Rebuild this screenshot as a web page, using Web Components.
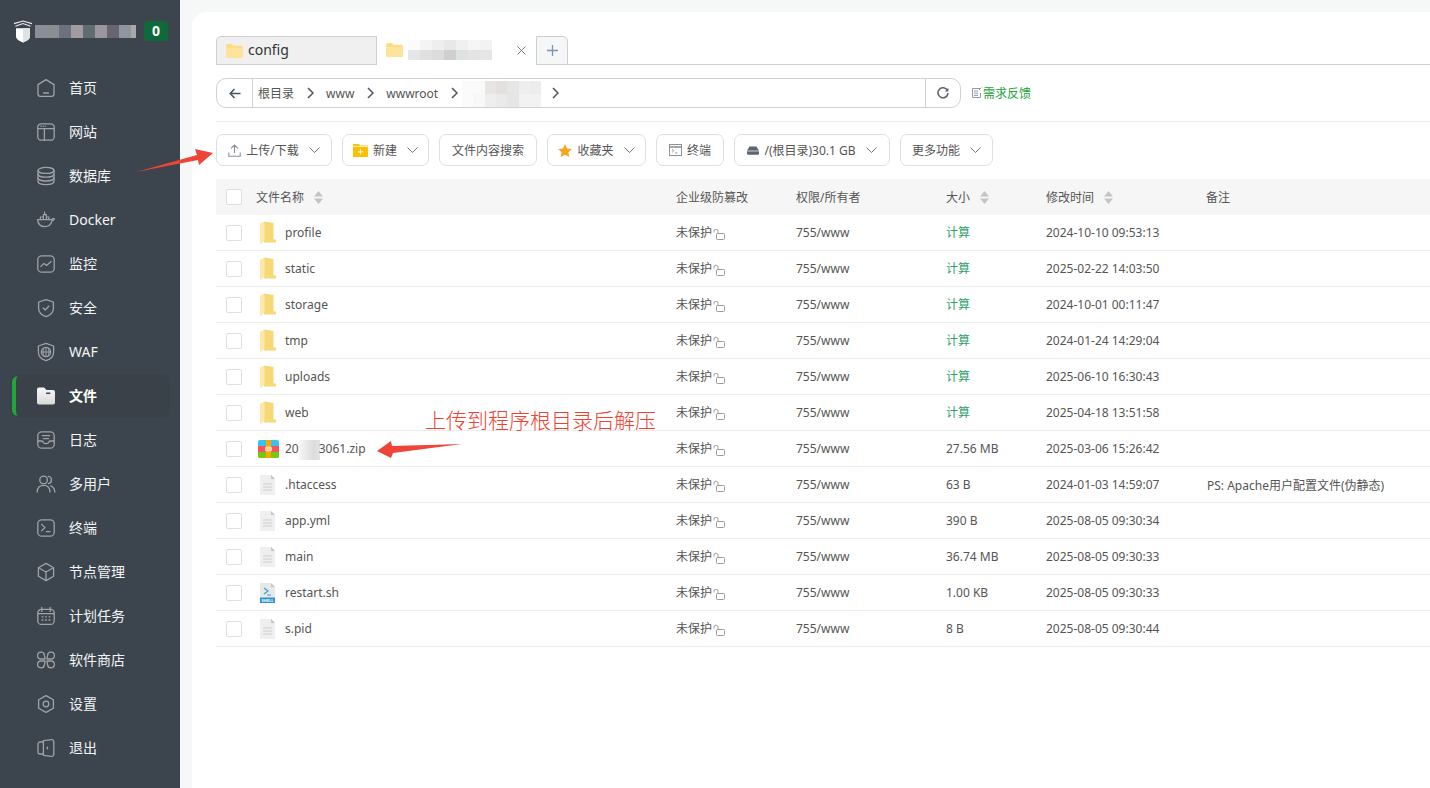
<!DOCTYPE html>
<html lang="zh">
<head>
<meta charset="utf-8">
<title>文件</title>
<style>
    html, body { margin: 0; height: 100%; overflow: hidden; }
    body { font-family: "Noto Sans", "Noto Sans CJK SC", sans-serif; }
</style>
</head>
<body>
<file-page>
    <side-bar slot="side">
        <nav-item icon="home">首页</nav-item>
        <nav-item icon="site">网站</nav-item>
        <nav-item icon="db">数据库</nav-item>
        <nav-item icon="docker">Docker</nav-item>
        <nav-item icon="monitor">监控</nav-item>
        <nav-item icon="shield">安全</nav-item>
        <nav-item icon="waf">WAF</nav-item>
        <nav-item icon="folder" active>文件</nav-item>
        <nav-item icon="log">日志</nav-item>
        <nav-item icon="users">多用户</nav-item>
        <nav-item icon="term">终端</nav-item>
        <nav-item icon="node">节点管理</nav-item>
        <nav-item icon="cal">计划任务</nav-item>
        <nav-item icon="store">软件商店</nav-item>
        <nav-item icon="gear">设置</nav-item>
        <nav-item icon="exit">退出</nav-item>
    </side-bar>

    <file-tabs></file-tabs>
    <path-bar></path-bar>

    <tool-bar>
        <tool-button icon="upload" arrow style="width:116px">上传/下载</tool-button>
        <tool-button icon="newfolder" arrow style="width:87px">新建</tool-button>
        <tool-button style="width:98px">文件内容搜索</tool-button>
        <tool-button icon="star" arrow style="width:99px">收藏夹</tool-button>
        <tool-button icon="console" style="width:68px">终端</tool-button>
        <tool-button icon="disk" arrow style="width:156px">/(根目录)30.1 GB</tool-button>
        <tool-button arrow style="width:93px">更多功能</tool-button>
    </tool-bar>

    <file-table>
        <file-row name="profile" kind="dir" time="2024-10-10 09:53:13"></file-row>
        <file-row name="static" kind="dir" time="2025-02-22 14:03:50"></file-row>
        <file-row name="storage" kind="dir" time="2024-10-01 00:11:47"></file-row>
        <file-row name="tmp" kind="dir" time="2024-01-24 14:29:04"></file-row>
        <file-row name="uploads" kind="dir" time="2025-06-10 16:30:43"></file-row>
        <file-row name="web" kind="dir" time="2025-04-18 13:51:58"></file-row>
        <file-row name="3061.zip" prefix="20" kind="zip" size="27.56 MB" time="2025-03-06 15:26:42"></file-row>
        <file-row name=".htaccess" kind="file" size="63 B" time="2024-01-03 14:59:07" note="PS: Apache用户配置文件(伪静态)"></file-row>
        <file-row name="app.yml" kind="file" size="390 B" time="2025-08-05 09:30:34"></file-row>
        <file-row name="main" kind="file" size="36.74 MB" time="2025-08-05 09:30:33"></file-row>
        <file-row name="restart.sh" kind="shell" size="1.00 KB" time="2025-08-05 09:30:33"></file-row>
        <file-row name="s.pid" kind="file" size="8 B" time="2025-08-05 09:30:44"></file-row>
    </file-table>
</file-page>

<script>
const NAV_ICONS = {
    home: '<path d="M10 1.600 18 6.600V16a2.400 2.400 0 0 1-2.400 2.400H4.400A2.400 2.400 0 0 1 2 16V6.600Z"/><path d="M7.500 15h5"/>',
    site: '<rect x="1.800" y="1.800" width="16.400" height="16.400" rx="3.500"/><path d="M2 6.600h16M8.400 6.600v11.600"/><path d="M4.600 4.200h.8M6.800 4.200h.8M9 4.200h.8" stroke-width="1"/>',
    db: '<ellipse cx="10" cy="4.400" rx="8" ry="3"/><path d="M2 4.400v11.200c0 1.700 3.600 3 8 3s8-1.300 8-3V4.400"/><path d="M2 8.200c0 1.700 3.600 3 8 3s8-1.300 8-3M2 12c0 1.700 3.600 3 8 3s8-1.300 8-3"/>',
    docker: '<path d="M1.600 9.600h14.200c.4-1 1.400-1.300 2.600-.8-.3 1.100-1.200 1.800-2.300 1.800-1 3.800-3.800 6-7.200 6-4.200 0-7-2.800-7.300-7Z"/><path d="M4.400 9.400V7h3V4.600h3V7h2.400v2.400M7.400 7v2.400M10.400 7v2.400" stroke-width="1.200"/><path d="M8.600 2v2.400" stroke-width="1.200"/>',
    monitor: '<rect x="1.800" y="1.800" width="16.400" height="16.400" rx="4"/><path d="M4.800 12.400 8 9.400l2.600 2L15 7.400"/>',
    shield: '<path d="M10 1.600 17.400 4v6.200c0 4.400-3.400 7-7.400 8.400-4-1.400-7.400-4-7.400-8.400V4Z"/><path d="m7.200 10 2 2 3.600-3.800"/>',
    waf: '<path d="M10 1.400 17.600 4v6.400c0 4.200-3.400 6.800-7.600 8.200-4.200-1.400-7.600-4-7.600-8.200V4Z"/><circle cx="10" cy="10" r="4.600"/><path d="M5.400 10h9.200M10 5.400v9.200M7.900 6c-1.200 2.500-1.200 5.500 0 8M12.100 6c1.200 2.500 1.200 5.500 0 8" stroke-width="1"/>',
    log: '<rect x="1.800" y="1.800" width="16.400" height="16.400" rx="4"/><path d="M2 11h4.400c.6 1.600 1.900 2.600 3.600 2.600s3-1 3.600-2.600H18M6.400 5.600h7.200M7.400 8.600h5.200"/>',
    users: '<circle cx="7.600" cy="6" r="3.800"/><path d="M1.200 18c.2-4.400 2.800-6.600 6.400-6.600s6.200 2.200 6.400 6.600"/><path d="M12.200 2.400c2 .2 3.200 1.800 3.200 3.600s-1.200 3.300-3 3.600M14.800 11.800c2.400.8 3.800 3 4 6.200"/>',
    term: '<rect x="1.800" y="1.800" width="16.400" height="16.400" rx="4"/><path d="m5.600 6.400 3.400 3.200-3.400 3.200M10.400 13.600h3.600"/>',
    node: '<path d="M10 1.400 17.600 5.700v8.600L10 18.600l-7.600-4.300V5.700Z"/><path d="M2.600 5.800 10 10l7.400-4.200M10 10v8.400"/>',
    cal: '<rect x="1.800" y="3.400" width="16.400" height="15" rx="3.500"/><path d="M2 7.600h16M5.800 1.400v4M14.200 1.400v4"/><path d="M6 10.800h1M9.500 10.800h1M13 10.800h1M6 14h1M9.500 14h1M13 14h1" stroke-width="1.300"/>',
    store: '<path d="M9 9H5a3.400 3.400 0 1 1 3.400-3.800C8.700 6.600 9 8 9 9ZM11 9h4a3.400 3.400 0 1 0-3.400-3.800C11.300 6.600 11 8 11 9ZM9 11H5a3.400 3.400 0 1 0 3.400 3.800c.3-1.400.6-2.800.6-3.800ZM11 11h4a3.400 3.400 0 1 1-3.400 3.800c-.3-1.400-.6-2.800-.6-3.800Z"/>',
    gear: '<path d="M10 1.600 17.400 5.800v8.400L10 18.400l-7.400-4.200V5.800Z"/><circle cx="10" cy="10" r="2.800"/>',
    exit: '<path d="M7.400 2.600 15.600 1.600a2 2 0 0 1 2.200 2v12.800a2 2 0 0 1-2.200 2l-8.200-1Z"/><path d="M7.400 4H4a2 2 0 0 0-2 2v8a2 2 0 0 0 2 2h3.400"/><path d="M11.400 9.200v1.600" stroke-width="1.400"/>'
};

class NavItem extends HTMLElement {
    constructor() {
        super();
        this.attachShadow({ mode: 'open' });
        const key = this.getAttribute('icon');
        const folder = '<defs><linearGradient id="fg" x1="0" y1="0" x2="0" y2="1"><stop offset="0" stop-color="#f7f7f7"/><stop offset="1" stop-color="#d9d9d9"/></linearGradient></defs>'
            + '<path fill="url(#fg)" stroke="none" d="M1 3.400A2 2 0 0 1 3 1.400h4.400c.8 0 1.200.4 1.700 1.100L10.400 4H17a2 2 0 0 1 2 2v10.600a2 2 0 0 1-2 2H3a2 2 0 0 1-2-2Z"/>'
            + '<path d="M10.600 7.200h3.200" stroke="#3c444d" stroke-width="1.400"/>';
        this.shadowRoot.innerHTML = `
            <style>
                :host { display: block; height: 44px; padding: 2px 12px; box-sizing: border-box; }
                .row {
                    height: 40px;
                    display: flex;
                    align-items: center;
                    gap: 13px;
                    padding-left: 24px;
                    box-sizing: border-box;
                    border-radius: 6px;
                    color: #f2f4f5;
                    font-size: 14px;
                }
                .row span { margin-bottom: 2px; }
                .row.on {
                    padding-left: 20px;
                    border-left: 4px solid #20a53a;
                    background: #3b4149;
                    box-shadow: 0 0 2px rgba(40,46,54,.6);
                    font-weight: 700;
                    color: #fff;
                }
                svg {
                    width: 20px; height: 20px; flex: none;
                    fill: none; stroke: #a0a3a6; stroke-width: 1.3;
                    stroke-linecap: round; stroke-linejoin: round;
                }
            </style>
            <div class="row ${this.hasAttribute('active') ? 'on' : ''}">
                <svg viewBox="0 0 20 20">${key === 'folder' ? folder : NAV_ICONS[key]}</svg>
                <span><slot></slot></span>
            </div>
        `;
    }
}
customElements.define('nav-item', NavItem);

class SideBar extends HTMLElement {
    constructor() {
        super();
        this.attachShadow({ mode: 'open' });
        const cells = ['#8d8c9b', '#87908e', '#6e7080', '#a19ba2', '#5f6c70', '#9b96a0', '#666672', '#8f979d', '#a9a9ac']
            .map((c, i) => `<i style="background:${c};width:${i === 8 ? 5 : 12}px"></i>`).join('');
        this.shadowRoot.innerHTML = `
            <style>
                :host {
                    display: block;
                    width: 180px;
                    height: 788px;
                    background: #3c444d;
                    overflow: hidden;
                    flex: none;
                }
                .top {
                    height: 66px;
                    display: flex;
                    align-items: flex-start;
                    padding: 20px 12px 0 13px;
                    box-sizing: border-box;
                }
                .logo { width: 20px; height: 23px; flex: none; }
                .name { display: flex; height: 13px; margin: 5px 0 0 2px; width: 109px; }
                .name i { display: block; height: 13px; flex: none; }
                .badge {
                    margin: 1px 0 0 auto;
                    width: 24px; height: 20px;
                    border-radius: 4px;
                    background: #0f6a3b;
                    color: #fff;
                    font: 700 14px/20px "Noto Sans", sans-serif;
                    text-align: center;
                }
            </style>
            <div class="top">
                <svg class="logo" viewBox="0 0 20 23">
                    <path d="M3 8.200h14v8.200c0 2.600-3.400 4.600-7 6-3.600-1.400-7-3.400-7-6Z" fill="#fff"/>
                    <path d="M10 8.200h7v8.200c0 2.600-3.400 4.600-7 6Z" fill="#dfe1e3"/>
                    <path d="M1 3.600 10 1l9 2.600M2.400 6.200 10 3.600l7.600 2.600" fill="none" stroke="#eceeef" stroke-width="1.100"/>
                </svg>
                <div class="name">${cells}</div>
                <div class="badge">0</div>
            </div>
            <slot></slot>
        `;
    }
}
customElements.define('side-bar', SideBar);

const TAB_FOLDER = `<svg viewBox="0 0 18 15" width="17" height="14">
    <path d="M0 2a2 2 0 0 1 2-2h4.200l1.600 1.800H16a2 2 0 0 1 2 2V13a2 2 0 0 1-2 2H2a2 2 0 0 1-2-2Z" fill="#fbdc7f"/>
    <path d="M0 4h18v9a2 2 0 0 1-2 2H2a2 2 0 0 1-2-2Z" fill="#fde49b"/>
</svg>`;

class FileTabs extends HTMLElement {
    constructor() {
        super();
        this.attachShadow({ mode: 'open' });
        const top = ['#fbfbfb', '#f4f4f4', '#eeeeee', '#e8e8e8', '#f0f0f0', '#f6f6f6', '#f2f2f2'];
        const low = ['#e6e6e6', '#e0e0e0', '#dcdcdc', '#cfcfcf', '#dfe2e3', '#e4e4e4', '#e6e6e6'];
        const blur = [...top, ...low].map(c => `<i style="background:${c}"></i>`).join('');
        this.shadowRoot.innerHTML = `
            <style>
                :host {
                    display: flex;
                    height: 29px;
                    margin: 24px 0 0 24px;
                    border-bottom: 1px solid #cfcfcf;
                    box-sizing: border-box;
                    font-size: 14px;
                    color: #333;
                }
                .tab {
                    height: 29px;
                    box-sizing: border-box;
                    display: flex;
                    align-items: center;
                    border: 1px solid #cfcfcf;
                    flex: none;
                }
                .first {
                    width: 161px;
                    padding-left: 9px;
                    gap: 5px;
                    background: #f0f0f0;
                    border-radius: 5px 0 0 0;
                }
                .first span { margin-top: -2px; }
                .cur {
                    width: 159px;
                    padding-left: 9px;
                    background: #fff;
                    border-width: 0;
                    border-bottom: 1px solid #fff;
                    position: relative;
                }
                .blur {
                    display: grid;
                    grid-template-columns: repeat(7, 12px);
                    grid-auto-rows: 10px;
                    margin-left: 5px;
                }
                .blur i { display: block; }
                .close { margin-left: auto; margin-right: 10px; width: 9px; height: 9px; }
                .add {
                    width: 32px;
                    justify-content: center;
                    background: #f5f6f7;
                    border-radius: 0 5px 0 0;
                }
            </style>
            <div class="tab first">${TAB_FOLDER}<span>config</span></div>
            <div class="tab cur">${TAB_FOLDER}<div class="blur">${blur}</div>
                <svg class="close" viewBox="0 0 9 9"><path d="M.5.5l8 8M8.500.5l-8 8" stroke="#777" stroke-width="1"/></svg>
            </div>
            <div class="tab add">
                <svg width="13" height="13" viewBox="0 0 13 13"><path d="M6.500 1v11M1 6.500h11" stroke="#7d94ac" stroke-width="1.300"/></svg>
            </div>
        `;
    }
}
customElements.define('file-tabs', FileTabs);

class PathBar extends HTMLElement {
    constructor() {
        super();
        this.attachShadow({ mode: 'open' });
        const chev = '<svg class="chev" viewBox="0 0 7 12"><path d="M1 1l5 5-5 5" fill="none" stroke="#4a5560" stroke-width="1.500"/></svg>';
        const cells = ['#fafafa', '#fafafa', '#e8e4e4', '#e4e0e0', '#e6e6e6', '#eeeeee', '#ececec',
            '#fbfbfb', '#f8f8f8', '#eeeeee', '#eaeaea', '#e6e6e6', '#f2f2f2', '#f2f2f2']
            .map(c => `<i style="background:${c}"></i>`).join('');
        this.shadowRoot.innerHTML = `
            <style>
                :host {
                    display: block;
                    margin: 13px 0 0 24px;
                    height: 43px;
                    border-bottom: 1px solid #ececec;
                    font-size: 12px;
                    color: #555;
                }
                .wrap { display: flex; align-items: center; }
                .box {
                    width: 745px;
                    height: 30px;
                    box-sizing: border-box;
                    display: flex;
                    align-items: stretch;
                    border: 1px solid #cfd1d3;
                    border-radius: 10px;
                    flex: none;
                }
                .back {
                    width: 35px; flex: none;
                    display: flex; align-items: center; justify-content: center;
                    border-right: 1px solid #cfd1d3;
                }
                .crumbs { flex: 1; display: flex; align-items: center; padding-left: 5px; }
                .crumbs span { white-space: nowrap; }
                .crumbs span.sep { display: flex; }
                .chev { width: 7px; height: 12px; flex: none; }
                .c1 { margin: 0 12px 0 13px; }
                .c2 { margin: 0 12px 0 13px; }
                .c3 { margin: 0 0 0 13px; }
                .blur {
                    display: grid;
                    grid-template-columns: repeat(7, 11.3px);
                    grid-auto-rows: 13px;
                    margin: 1px 0 0 4px;
                }
                .blur i { display: block; }
                .c4 { margin-left: 11px; }
                .refresh {
                    width: 34px; flex: none;
                    display: flex; align-items: center; justify-content: center;
                    border-left: 1px solid #cfd1d3;
                }
                .feedback {
                    margin-left: 10px;
                    display: flex;
                    align-items: center;
                    color: #20a53a;
                    font-size: 12px;
                    white-space: nowrap;
                }
            </style>
            <div class="wrap">
                <div class="box">
                    <div class="back">
                        <svg width="12" height="11" viewBox="0 0 12 11"><path d="M11.500 5.500H1.500M5.500 1 1.200 5.500 5.500 10" fill="none" stroke="#4a5560" stroke-width="1.600"/></svg>
                    </div>
                    <div class="crumbs">
                        <span>根目录</span><span class="sep c1">${chev}</span><span>www</span><span class="sep c2">${chev}</span><span>wwwroot</span><span class="sep c3">${chev}</span>
                        <div class="blur">${cells}</div><span class="sep c4">${chev}</span>
                    </div>
                    <div class="refresh">
                        <svg width="12" height="12" viewBox="0 0 12 12"><path d="M10.400 3.400A5 5 0 1 0 11 6" fill="none" stroke="#5b6670" stroke-width="1.600"/><path d="M11.400.8v3.600H7.800Z" fill="#5b6670"/></svg>
                    </div>
                </div>
                <div class="feedback">
                    <svg width="12" height="12" viewBox="0 0 12 12"><path d="M9 1.500H1.500v9h8V6M3 4h4M3 6.200h4M3 8.400h4M10.500.5 8 3" fill="none" stroke="#8f9aa6" stroke-width="1"/></svg>
                    <span>需求反馈</span>
                </div>
            </div>
        `;
    }
}
customElements.define('path-bar', PathBar);

const TOOL_ICONS = {
    upload: '<svg width="13" height="13" viewBox="0 0 13 13"><path d="M6.500 9V1M3 4.400 6.500 1 10 4.400M.8 8.400v3.800h11.400V8.400" fill="none" stroke="#8a8f94" stroke-width="1.100"/></svg>',
    newfolder: '<svg width="15" height="13" viewBox="0 0 15 13"><path d="M0 0h6l1.400 1.600H15V13H0Z" fill="#fcc000"/><path d="M0 2.400h15" stroke="#fff" stroke-width=".8"/><path d="M7.500 5.400v5M5 7.900h5" stroke="#fff" stroke-width="1"/></svg>',
    star: '<svg width="14" height="13" viewBox="0 0 14 13"><path d="M7 0l2.100 4.400 4.800.6-3.500 3.300.9 4.700L7 10.700 2.700 13l.9-4.700L.1 5l4.800-.6Z" fill="#f5a623"/></svg>',
    console: '<svg width="13" height="12" viewBox="0 0 13 12"><rect x=".5" y=".5" width="12" height="11" fill="#fff" stroke="#8d9095"/><path d="M.5 3h12" stroke="#8d9095" stroke-width="1.600"/><path d="m3 5.200 1.800 1.600L3 8.400M6 9h2.500" fill="none" stroke="#8d9095" stroke-width=".9"/></svg>',
    disk: '<svg width="12" height="9" viewBox="0 0 12 9"><path d="M2.600.4h6.800L12 4.600V7.500A1.300 1.300 0 0 1 10.700 8.800H1.300A1.300 1.300 0 0 1 0 7.500V4.600Z" fill="#5d6670"/><path d="M0 5h12" stroke="#fff" stroke-width=".7"/></svg>'
};

class ToolButton extends HTMLElement {
    constructor() {
        super();
        this.attachShadow({ mode: 'open' });
        const icon = TOOL_ICONS[this.getAttribute('icon')] || '';
        const arrow = this.hasAttribute('arrow')
            ? '<svg class="down" viewBox="0 0 11 6"><path d="M.5.5l5 5 5-5" fill="none" stroke="#707579" stroke-width="1"/></svg>' : '';
        this.shadowRoot.innerHTML = `
            <style>
                :host {
                    display: flex;
                    align-items: center;
                    justify-content: center;
                    gap: 5px;
                    height: 32px;
                    box-sizing: border-box;
                    border: 1px solid #dcdfe6;
                    border-radius: 7px;
                    background: #fff;
                    font-size: 12px;
                    color: #555;
                    white-space: nowrap;
                    flex: none;
                }
                .down { width: 11px; height: 6px; margin-left: 5px; }
            </style>
            ${icon}<slot></slot>${arrow}
        `;
    }
}
customElements.define('tool-button', ToolButton);

class ToolBar extends HTMLElement {
    constructor() {
        super();
        this.attachShadow({ mode: 'open' });
        this.shadowRoot.innerHTML = `
            <style>
                :host {
                    display: flex;
                    gap: 10px;
                    margin: 12px 0 0 24px;
                }
            </style>
            <slot></slot>
        `;
    }
}
customElements.define('tool-bar', ToolBar);

const ROW_GRID = 'grid-template-columns: 40px 420px 120px 150px 100px 160px 1fr;';
const CHECK_CSS = `.check {
    width: 14px; height: 14px; margin-left: 10px;
    border: 1px solid #dcdfe6; border-radius: 2px; background: #fff;
}`;
const SORT = '<svg class="sort" viewBox="0 0 9 13"><path d="M4.500 0 9 5.500H0ZM0 7.500h9L4.500 13Z" fill="#c4c4c4"/></svg>';

class FileTable extends HTMLElement {
    constructor() {
        super();
        this.attachShadow({ mode: 'open' });
        this.shadowRoot.innerHTML = `
            <style>
                :host { display: block; margin: 13px 0 0 24px; font-size: 12px; color: #555; }
                .head {
                    display: grid;
                    ${ROW_GRID}
                    height: 36px;
                    align-items: center;
                    background: #f6f6f6;
                    color: #555;
                }
                ${CHECK_CSS}
                .sort { width: 9px; height: 13px; margin-left: 10px; vertical-align: -2px; }
            </style>
            <div class="head">
                <div class="check"></div>
                <div>文件名称${SORT}</div>
                <div>企业级防篡改</div>
                <div>权限/所有者</div>
                <div>大小${SORT}</div>
                <div>修改时间${SORT}</div>
                <div>备注</div>
            </div>
            <slot></slot>
        `;
    }
}
customElements.define('file-table', FileTable);

const FILE_ICONS = {
    dir: `<svg width="16" height="23" viewBox="0 0 16 23">
        <path d="M4 0.500 13.500 2V18.500H16V21.500H4Z" fill="#f6d876"/>
        <path d="M0 2.500 4.500 0.500V19.500L1 23 0 22Z" fill="#fce9ab"/>
    </svg>`,
    zip: `<svg width="21" height="18" viewBox="0 0 21 18">
        <rect width="21" height="18" rx="2" fill="#38c2ee"/>
        <rect y="6" width="21" height="6" fill="#f5565c"/>
        <path d="M0 12h21v4a2 2 0 0 1-2 2H2a2 2 0 0 1-2-2Z" fill="#7ac70c"/>
        <rect x="8" width="5" height="18" fill="#fba900"/>
        <rect x="7.500" y="7" width="6" height="4" rx="1" fill="#fbd38a" stroke="#fff" stroke-width=".6"/>
    </svg>`,
    file: `<svg width="15" height="20" viewBox="0 0 15 20">
        <path d="M0 0h11l4 4v16H0Z" fill="#efefef"/>
        <path d="M11 0l4 4h-4Z" fill="#c5c5c5"/>
        <path d="M3 9h9M3 12h9M3 15h9" stroke="#cdcdcd" stroke-width="1"/>
    </svg>`,
    shell: `<svg width="15" height="20" viewBox="0 0 15 20">
        <path d="M0 0h11l4 4v16H0Z" fill="#e9e9e4"/>
        <path d="M11 0l4 4h-4Z" fill="#c5c5c5"/>
        <path d="m4 5 4 3-4 3M7 12h4" fill="none" stroke="#2f9fe0" stroke-width="1.200"/>
        <rect y="14.500" width="15" height="5.500" fill="#2b93d1"/>
        <text x="7.500" y="19" text-anchor="middle" font-size="4" font-weight="700" fill="#fff" font-family="Noto Sans, sans-serif">SHELL</text>
    </svg>`
};

class FileRow extends HTMLElement {
    constructor() {
        super();
        this.attachShadow({ mode: 'open' });
        const a = n => this.getAttribute(n) || '';
        const kind = a('kind');
        const prefix = a('prefix') ? `${a('prefix')}<i class="mask"></i>` : '';
        const size = kind === 'dir' ? '<span class="calc">计算</span>' : a('size');
        this.shadowRoot.innerHTML = `
            <style>
                :host {
                    display: grid;
                    ${ROW_GRID}
                    height: 36px;
                    box-sizing: border-box;
                    align-items: center;
                    border-bottom: 1px solid #ececec;
                    white-space: nowrap;
                }
                ${CHECK_CSS}
                .name { display: flex; align-items: center; }
                .pic { width: 27px; display: flex; padding-left: 2px; box-sizing: border-box; flex: none; margin-left: 2px; }
                .pic.wide { padding-left: 0; }
                .mask { display: inline-block; width: 21px; height: 20px; vertical-align: middle; margin: -5px -1px -5px 0;
                    background: linear-gradient(90deg, #f6f6f6, #dcdcdc 70%, #e4e4e4); }
                .calc { color: #2fa26a; }
                .raise { margin-bottom: 2px; }
                .lock { width: 12px; height: 12px; vertical-align: -3px; margin-left: 1px; }
                .note { margin-left: 1px; }
            </style>
            <div class="check"></div>
            <div class="name">
                <span class="pic ${kind === 'zip' ? 'wide' : ''}">${FILE_ICONS[kind]}</span>
                <span>${prefix}${a('name')}</span>
            </div>
            <div class="raise">未保护<svg class="lock" viewBox="0 0 12 12"><rect x="3.500" y="5.500" width="8" height="6" rx="1" fill="#fff" stroke="#9a9a9a"/><path d="M1 4.500V3a2 2 0 0 1 4 .5V5.500" fill="none" stroke="#9a9a9a"/></svg></div>
            <div>755/www</div>
            <div class="${kind === 'dir' ? 'raise' : ''}">${size}</div>
            <div>${a('time')}</div>
            <div class="note">${a('note')}</div>
        `;
    }
}
customElements.define('file-row', FileRow);

class FilePage extends HTMLElement {
    constructor() {
        super();
        this.attachShadow({ mode: 'open' });
        this.shadowRoot.innerHTML = `
            <style>
                :host {
                    display: flex;
                    position: relative;
                    width: 1430px;
                    height: 788px;
                    overflow: hidden;
                    background: #f6f7f7;
                    font-family: "Noto Sans", "Noto Sans CJK SC", sans-serif;
                }
                .card {
                    flex: 1;
                    min-width: 0;
                    margin: 12px 0 0 12px;
                    background: #fff;
                    border-radius: 14px 0 0 0;
                }
                /* hand-drawn notes that sit over the page */
                .marks { position: absolute; left: 0; top: 0; pointer-events: none; }
                .note {
                    position: absolute;
                    left: 425px;
                    top: 404px;
                    font: 300 21px/30px "Noto Sans CJK SC", sans-serif;
                    color: #f0402f;
                    white-space: nowrap;
                }
            </style>
            <slot name="side"></slot>
            <div class="card"><slot></slot></div>
            <svg class="marks" width="1430" height="788">
                <path d="M136 172 197 155 195 149 213 153 199 165 198 160Z" fill="#ef4438"/>
                <path d="M462 444 392 446 391 441 377 451 391 458 393 453Z" fill="#ef4438"/>
            </svg>
            <div class="note">上传到程序根目录后解压</div>
        `;
    }
}
customElements.define('file-page', FilePage);
</script>
</body>
</html>
